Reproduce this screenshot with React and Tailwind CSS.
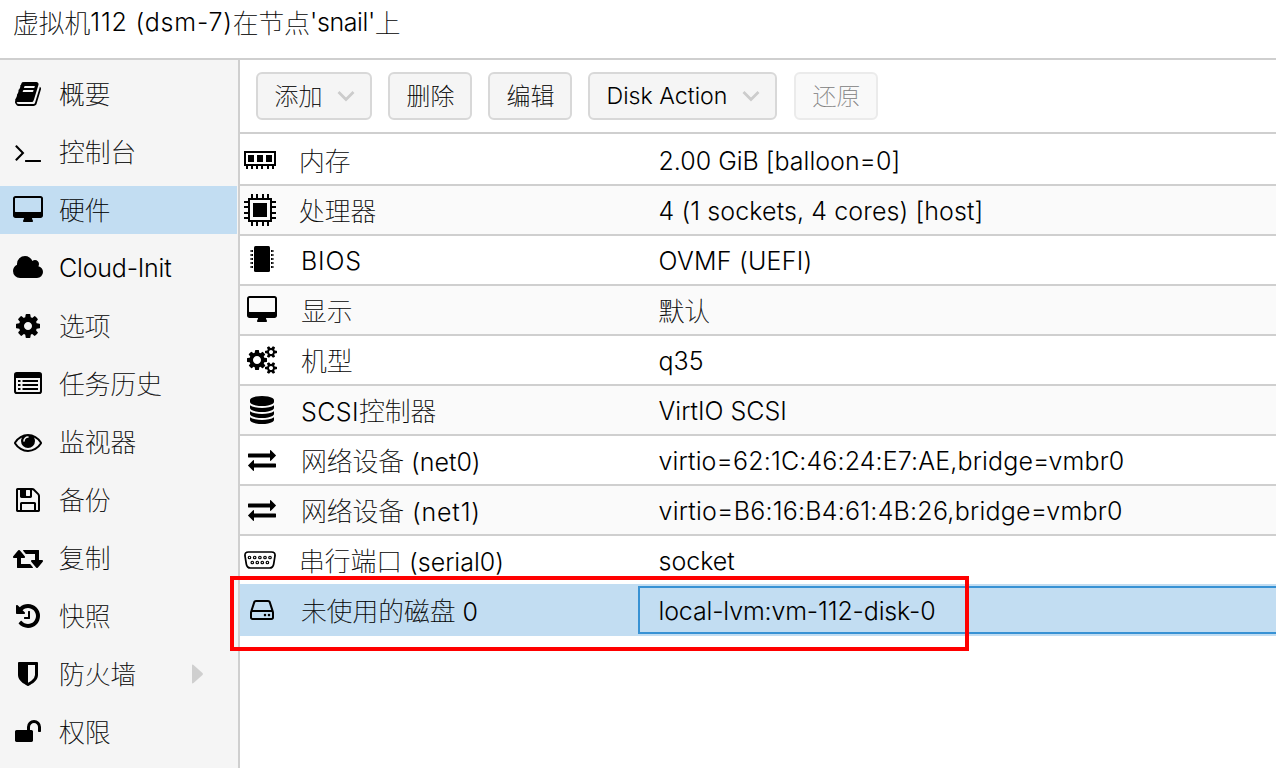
import React from "react";

function Glyph({ box, d, w, h, shift = "" }) {
  return (
    <svg viewBox={box} width={w} height={h} className={`relative shrink-0 ${shift}`} fill="currentColor" aria-hidden="true">
      <path d={d} />
    </svg>
  );
}

const PATHS = {
  book: "M1639 478q40 57 18 129l-275 906q-19 64-76.5 107.5t-122.5 43.5h-923q-77 0-148.5-53.5t-99.5-131.5q-24-67-2-127 0-4 3-27t4-37q1-8-3-21.5t-3-19.5q2-11 8-21t16.5-23.5 16.5-23.5q23-38 45-91.5t30-91.5q3-10 .5-30t-.5-28q3-11 17-28t17-23q21-36 42-92t25-90q1-9-2.5-32t.5-28q4-13 22-30.5t22-22.5q19-26 42.5-84.5t27.5-96.5q1-8-3-25.5t-2-26.5q2-8 9-18t18-23 17-21q8-12 16.5-30.5t15-35 16-36 19.5-32 26.5-23.5 36-11.5 47.5 5.5l-1 3q38-9 51-9h761q74 0 114 56t18 130l-274 906q-36 119-71.5 153.5t-128.5 34.5h-869q-27 0-38 15-11 16-1 43 24 70 144 70h923q29 0 56-15.5t35-41.5l300-987q7-22 5-57 38 15 59 43zm-1064 2q-4 13 2 22.5t20 9.5h608q13 0 25.5-9.5t16.5-22.5l21-64q4-13-2-22.5t-20-9.5h-608q-13 0-25.5 9.5t-16.5 22.5zm-83 256q-4 13 2 22.5t20 9.5h608q13 0 25.5-9.5t16.5-22.5l21-64q4-13-2-22.5t-20-9.5h-608q-13 0-25.5 9.5t-16.5 22.5z",
  terminal: "M649 983l-466 466q-10 10-23 10t-23-10l-50-50q-10-10-10-23t10-23l393-393-393-393q-10-10-10-23t10-23l50-50q10-10 23-10t23 10l466 466q10 10 10 23t-10 23zm1079 457v64q0 14-9 23t-23 9h-960q-14 0-23-9t-9-23v-64q0-14 9-23t23-9h960q14 0 23 9t9 23z",
  desktop: "M1792 992v-832q0-13-9.5-22.5t-22.5-9.5h-1600q-13 0-22.5 9.5t-9.5 22.5v832q0 13 9.5 22.5t22.5 9.5h1600q13 0 22.5-9.5t9.5-22.5zm128-832v1088q0 66-47 113t-113 47h-544q0 37 16 77.5t32 71 16 43.5q0 26-19 45t-45 19h-512q-26 0-45-19t-19-45q0-14 16-44t32-70 16-78h-544q-66 0-113-47t-47-113v-1088q0-66 47-113t113-47h1600q66 0 113 47t47 113z",
  cloud: "M1920 1152q0 159-112.5 271.5t-271.5 112.5h-1088q-185 0-316.5-131.5t-131.5-316.5q0-132 71-241.5t187-163.5q-2-28-2-43 0-212 150-362t362-150q158 0 286.5 88t187.5 230q70-62 166-62 106 0 181 75t75 181q0 75-41 138 129 30 213 134.5t84 239.5z",
  cog: "M1024 896q0-106-75-181t-181-75-181 75-75 181 75 181 181 75 181-75 75-181zm512-109v222q0 12-8 23t-20 13l-185 28q-19 54-39 91 35 50 107 138 10 12 10 25t-9 23q-27 37-99 108t-94 71q-12 0-26-9l-138-108q-44 23-91 38-16 136-29 186-7 28-36 28h-222q-14 0-24.5-8.5t-11.5-21.5l-28-184q-49-16-90-37l-141 107q-10 9-25 9-14 0-25-11-126-114-165-168-7-10-7-23 0-12 8-23 15-21 51-66.5t54-70.5q-27-50-41-99l-183-27q-13-2-21-12.5t-8-23.5v-222q0-12 8-23t19-13l186-28q14-46 39-92-40-57-107-138-10-12-10-24 0-10 9-23 26-36 98.5-107.5t94.5-71.5q13 0 26 10l138 107q44-23 91-38 16-136 29-186 7-28 36-28h222q14 0 24.5 8.5t11.5 21.5l28 184q49 16 90 37l142-107q9-9 24-9 13 0 25 10 129 119 165 170 7 8 7 22 0 12-8 23-15 21-51 66.5t-54 70.5q26 50 41 98l183 28q13 2 21 12.5t8 23.5z",
  eye: "M1664 960q-152-236-381-353 61 104 61 225 0 185-131.5 316.5t-316.5 131.5-316.5-131.5-131.5-316.5q0-121 61-225-229 117-381 353 133 205 333.5 326.5t434.5 121.5 434.5-121.5 333.5-326.5zm-720-384q0-20-14-34t-34-14q-125 0-214.5 89.5t-89.5 214.5q0 20 14 34t34 14 34-14 14-34q0-86 61-147t147-61q20 0 34-14t14-34zm848 384q0 34-20 69-140 230-376.5 368.5t-499.5 138.5-499.5-139-376.5-368q-20-35-20-69t20-69q140-229 376.5-368t499.5-139 499.5 139 376.5 368q20 35 20 69z",
  floppy: "M384 1536h768v-384h-768v384zm896 0h128v-896q0-14-10-38.5t-20-34.5l-281-281q-10-10-34-20t-39-10v416q0 40-28 68t-68 28h-576q-40 0-68-28t-28-68v-416h-128v1280h128v-416q0-40 28-68t68-28h832q40 0 68 28t28 68v416zm-384-928v-320q0-13-9.5-22.5t-22.5-9.5h-192q-13 0-22.5 9.5t-9.5 22.5v320q0 13 9.5 22.5t22.5 9.5h192q13 0 22.5-9.5t9.5-22.5zm640 32v928q0 40-28 68t-68 28h-1344q-40 0-68-28t-28-68v-1344q0-40 28-68t68-28h928q40 0 88 20t76 48l280 280q28 28 48 76t20 88z",
  retweet: "M1280 1504q0 13-9.5 22.5t-22.5 9.5h-960q-8 0-13.5-2t-9-7-5.5-8-3-11.5-1-11.5v-600h-192q-26 0-45-19t-19-45q0-24 15-41l320-384q19-22 49-22t49 22l320 384q15 17 15 41 0 26-19 45t-45 19h-192v384h576q16 0 25 11l160 192q7 10 7 21zm640-416q0 24-15 41l-320 384q-20 23-49 23t-49-23l-320-384q-15-17-15-41 0-26 19-45t45-19h192v-384h-576q-16 0-25-12l-160-192q-7-9-7-20 0-13 9.5-22.5t22.5-9.5h960q8 0 13.5 2t9 7 5.5 8 3 11.5 1 11.5v600h192q26 0 45 19t19 45z",
  history: "M1536 896q0 156-61 298t-164 245-245 164-298 61q-172 0-327-72.5t-264-204.5q-7-10-6.5-22.5t8.5-20.5l137-138q10-9 25-9 16 2 23 12 73 95 179 147t225 52q104 0 198.5-40.5t163.5-109.5 109.5-163.5 40.5-198.5-40.5-198.5-109.5-163.5-163.5-109.5-198.5-40.5q-98 0-188 35.5t-160 101.5l137 138q31 30 14 69-17 40-59 40h-448q-26 0-45-19t-19-45v-448q0-42 40-59 39-17 69 14l130 129q107-101 244.5-156.5t284.5-55.5q156 0 298 61t245 164 164 245 61 298zm-640-288v448q0 14-9 23t-23 9h-320q-14 0-23-9t-9-23v-64q0-14 9-23t23-9h224v-352q0-14 9-23t23-9h64q14 0 23 9t9 23z",
  shield: "M1088 960v-640h-448v1137q119-63 213-137 235-184 235-360zm192-768v768q0 86-33.5 170.5t-83 150-118 127.5-126.5 103-121 77.5-89.5 49.5-42.5 20q-12 6-26 6t-26-6q-16-7-42.5-20t-89.5-49.5-121-77.5-126.5-103-118-127.5-83-150-33.5-170.5v-768q0-26 19-45t45-19h1152q26 0 45 19t19 45z",
  unlock: "M1664 576v256q0 26-19 45t-45 19h-64q-26 0-45-19t-19-45v-256q0-106-75-181t-181-75-181 75-75 181v192h96q40 0 68 28t28 68v576q0 40-28 68t-68 28h-960q-40 0-68-28t-28-68v-576q0-40 28-68t68-28h672v-192q0-185 131.5-316.5t316.5-131.5 316.5 131.5 131.5 316.5z",
  cogs: "M896 896q0-106-75-181t-181-75-181 75-75 181 75 181 181 75 181-75 75-181zm768 512q0-52-38-90t-90-38-90 38-38 90q0 53 37.5 90.5t90.5 37.5 90.5-37.5 37.5-90.5zm0-1024q0-52-38-90t-90-38-90 38-38 90q0 53 37.5 90.5t90.5 37.5 90.5-37.5 37.5-90.5zm-384 421v185q0 10-7 19.5t-16 10.5l-155 24q-11 35-32 76 34 48 90 115 7 11 7 20 0 12-7 19-23 30-82.5 89.5t-78.5 59.5q-11 0-21-7l-115-90q-37 19-77 31-11 108-23 155-7 24-30 24h-186q-11 0-20-7.5t-10-17.5l-23-153q-34-10-75-31l-118 89q-7 7-20 7-11 0-21-8-144-133-144-160 0-9 7-19 10-14 41-53t47-61q-23-44-35-82l-152-24q-10-1-17-9.5t-7-19.5v-185q0-10 7-19.5t16-10.5l155-24q11-35 32-76-34-48-90-115-7-11-7-20 0-12 7-20 22-30 82-89t79-59q11 0 21 7l115 90q34-18 77-32 11-108 23-154 7-24 30-24h186q11 0 20 7.5t10 17.5l23 153q34 10 75 31l118-89q8-7 20-7 11 0 21 8 144 133 144 160 0 8-7 19-12 16-42 54t-45 60q23 48 34 82l152 23q10 2 17 10.5t7 19.5zm640 533v140q0 16-149 31-12 27-30 52 51 113 51 138 0 4-4 7-122 71-124 71-8 0-46-47t-52-68q-20 2-30 2t-30-2q-14 21-52 68t-46 47q-2 0-124-71-4-3-4-7 0-25 51-138-18-25-30-52-149-15-149-31v-140q0-16 149-31 13-29 30-52-51-113-51-138 0-4 4-7 4-2 35-20t59-34 30-16q8 0 46 46.5t52 67.5q20-2 30-2t30 2q51-71 92-112l6-2q4 0 124 70 4 3 4 7 0 25-51 138 17 23 30 52 149 15 149 31zm0-1024v140q0 16-149 31-12 27-30 52 51 113 51 138 0 4-4 7-122 71-124 71-8 0-46-47t-52-68q-20 2-30 2t-30-2q-14 21-52 68t-46 47q-2 0-124-71-4-3-4-7 0-25 51-138-18-25-30-52-149-15-149-31v-140q0-16 149-31 13-29 30-52-51-113-51-138 0-4 4-7 4-2 35-20t59-34 30-16q8 0 46 46.5t52 67.5q20-2 30-2t30 2q51-71 92-112l6-2q4 0 124 70 4 3 4 7 0 25-51 138 17 23 30 52 149 15 149 31z",
  database: "M768 768q237 0 443-43t325-127v170q0 69-103 128t-280 93.5-385 34.5-385-34.5-280-93.5-103-128v-170q119 84 325 127t443 43zm0 768q237 0 443-43t325-127v170q0 69-103 128t-280 93.5-385 34.5-385-34.5-280-93.5-103-128v-170q119 84 325 127t443 43zm0-384q237 0 443-43t325-127v170q0 69-103 128t-280 93.5-385 34.5-385-34.5-280-93.5-103-128v-170q119 84 325 127t443 43zm0-1152q208 0 385 34.5t280 93.5 103 128v128q0 69-103 128t-280 93.5-385 34.5-385-34.5-280-93.5-103-128v-128q0-69 103-128t280-93.5 385-34.5z",
  exchange: "M1792 1184v192q0 13-9.5 22.5t-22.5 9.5h-1376v192q0 13-9.5 22.5t-22.5 9.5q-12 0-24-10l-319-320q-9-9-9-22 0-14 9-23l320-320q9-9 23-9 13 0 22.5 9.5t9.5 22.5v192h1376q13 0 22.5 9.5t9.5 22.5zm0-544q0 14-9 23l-320 320q-9 9-23 9-13 0-22.5-9.5t-9.5-22.5v-192h-1376q-13 0-22.5-9.5t-9.5-22.5v-192q0-13 9.5-22.5t22.5-9.5h1376v-192q0-14 9-23t23-9q12 0 24 10l319 319q9 9 9 23z",
  hdd: "M1040 1216q0 33-23.5 56.5t-56.5 23.5-56.5-23.5-23.5-56.5 23.5-56.5 56.5-23.5 56.5 23.5 23.5 56.5zm256 0q0 33-23.5 56.5t-56.5 23.5-56.5-23.5-23.5-56.5 23.5-56.5 56.5-23.5 56.5 23.5 23.5 56.5zm112 160v-320q0-13-9.5-22.5t-22.5-9.5h-1216q-13 0-22.5 9.5t-9.5 22.5v320q0 13 9.5 22.5t22.5 9.5h1216q13 0 22.5-9.5t9.5-22.5zm-1230-480h1180l-157-482q-4-13-16-21.5t-26-8.5h-782q-14 0-26 8.5t-16 21.5zm1358 160v320q0 66-47 113t-113 47h-1216q-66 0-113-47t-47-113v-320q0-25 16-75l197-606q17-53 63-86t101-33h782q55 0 101 33t63 86l197 606q16 50 16 75z",
};

const desktop = (shift) => <Glyph box="0 0 1920 1664" d={PATHS.desktop} w={30} h={26} shift={shift} />;

const ListIcon = () => (
  <svg viewBox="0 0 28 22" width="28" height="22" className="relative -top-px shrink-0" aria-hidden="true">
    <rect x="1" y="1" width="26" height="20" rx="1.8" fill="none" stroke="black" strokeWidth="2" />
    <rect x="1" y="1" width="26" height="5" />
    <path d="M4 8h2.5v2H4zM4 12h2.5v2H4zM4 16h2.5v2H4zM8.5 8H24v2H8.5zM8.5 12H24v2H8.5zM8.5 16H24v2H8.5z" />
  </svg>
);

const MemoryIcon = () => (
  <svg viewBox="0 0 32 18" width="32" height="18" shapeRendering="crispEdges" aria-hidden="true">
    <path d="M1 1H31V14H1Z" fill="none" stroke="black" strokeWidth="2" />
    <path d="M4 4h6v7H4zM13 4h6v7h-6zM22 4h6v7h-6zM2 15h2v3H2zM7 15h2v3H7zM12 15h2v3h-2zM17 15h2v3h-2zM23 15h2v3h-2zM28 15h2v3h-2z" />
  </svg>
);

const CpuIcon = () => (
  <svg viewBox="0 0 32 32" width="32" height="32" shapeRendering="crispEdges" aria-hidden="true">
    <rect x="5" y="5" width="22" height="22" fill="none" stroke="black" strokeWidth="2" />
    <rect x="9" y="9" width="14" height="14" />
    <path d="M7 0h2v4H7zM12 0h2v4h-2zM18 0h2v4h-2zM23 0h2v4h-2zM7 28h2v4H7zM12 28h2v4h-2zM18 28h2v4h-2zM23 28h2v4h-2zM0 7h4v2H0zM0 12h4v2H0zM0 18h4v2H0zM0 23h4v2H0zM28 7h4v2h-4zM28 12h4v2h-4zM28 18h4v2h-4zM28 23h4v2h-4z" />
  </svg>
);

const ChipIcon = () => (
  <svg viewBox="0 0 24 26" width="24" height="26" className="relative -top-px" aria-hidden="true">
    <rect x="4" y="0" width="16" height="26" rx="1.5" />
    {[4, 8, 12, 16, 20].map((y) => (
      <path key={y} d={`M3 ${y}v2H1.5v-.5H0v-1h1.500v-.5zM21 ${y}v2h1.500v-.5H24v-1h-1.500v-.5z`} />
    ))}
  </svg>
);

const SerialIcon = () => (
  <svg viewBox="0 0 32 18" width="32" height="18" fill="none" stroke="black" aria-hidden="true">
    <path d="M4.500 1h23Q31.500 1 31 5l-1.300 8Q29 17 25.500 17h-19Q3 17 2.300 13L1 5Q.5 1 4.500 1Z" strokeWidth="1.700" />
    {[5.5, 10.7, 15.9, 21, 26].map((x) => <circle key={x} cx={x} cy="6.500" r="1.250" strokeWidth="1.200" />)}
    {[8.3, 13.3, 18.3, 23.4].map((x) => <circle key={x} cx={x} cy="11.500" r="1.250" strokeWidth="1.200" />)}
  </svg>
);

const Chevron = () => (
  <svg viewBox="0 0 18 12" width="18" height="12" fill="none" stroke="#cccccc" strokeWidth="2.800" aria-hidden="true">
    <path d="M1.500 2 9 9.500 16.500 2" />
  </svg>
);

// Latin and Chinese runs use different faces, so the text is split between them.
function Mixed({ text, track = "" }) {
  return text.split(/([\u4e00-\u9fff]+)/).filter(Boolean).map((part, i) =>
    /[\u4e00-\u9fff]/.test(part) ? (
      <span key={i} className="font-['Noto_Sans_CJK_SC',sans-serif] text-[1.03em] font-thin [-webkit-text-stroke:0.2px_currentColor]">{part}</span>
    ) : (
      <span key={i} className={`whitespace-pre font-light ${track}`}>{part}</span>
    )
  );
}

const MENU = [
  { text: "概要", icon: <Glyph box="0 128 1664 1536" d={PATHS.book} w={26} h={24} /> },
  { text: "控制台", icon: <Glyph box="64 448 1664 1088" d={PATHS.terminal} w={26} h={17} shift="top-[1.5px]" /> },
  { text: "硬件", icon: desktop("-top-px"), active: true },
  { text: "Cloud-Init", icon: <Glyph box="0 128 1920 1408" d={PATHS.cloud} w={30} h={22} shift="-top-px" />, track: "tracking-[-0.2px]" },
  { text: "选项", icon: <Glyph box="0 128 1536 1536" d={PATHS.cog} w={24} h={24} /> },
  { text: "任务历史", icon: <ListIcon /> },
  { text: "监视器", icon: <Glyph box="0 384 1792 1152" d={PATHS.eye} w={28} h={18} shift="top-px" /> },
  { text: "备份", icon: <Glyph box="0 128 1536 1536" d={PATHS.floppy} w={24} h={24} /> },
  { text: "复制", icon: <Glyph box="0 384 1920 1152" d={PATHS.retweet} w={30} h={18} shift="top-px" /> },
  { text: "快照", icon: <Glyph box="0 128 1536 1536" d={PATHS.history} w={24} h={24} /> },
  { text: "防火墙", icon: <Glyph box="0 128 1280 1536" d={PATHS.shield} w={20} h={24} />, more: true },
  { text: "权限", icon: <Glyph box="0 128 1664 1408" d={PATHS.unlock} w={26} h={22} shift="-top-px" /> },
];

const exchange = <Glyph box="0 288 1792 1344" d={PATHS.exchange} w={28} h={21} />;

const ROWS = [
  { name: "内存", value: "2.00 GiB [balloon=0]", icon: <MemoryIcon />, image: true },
  { name: "处理器", value: "4 (1 sockets, 4 cores) [host]", icon: <CpuIcon />, image: true, track: "tracking-[0.1px]" },
  { name: "BIOS", value: "OVMF (UEFI)", icon: <ChipIcon />, nameTrack: "tracking-[0.8px]", track: "tracking-[0.25px]" },
  { name: "显示", value: "默认", icon: desktop("-top-px") },
  { name: "机型", value: "q35", icon: <Glyph box="0 0 1920 1792" d={PATHS.cogs} w={30} h={28} /> },
  { name: "SCSI控制器", value: "VirtIO SCSI", icon: <Glyph box="0 0 1536 1792" d={PATHS.database} w={24} h={28} />, nameTrack: "tracking-[0.4px]" },
  { name: "网络设备 (net0)", value: "virtio=62:1C:46:24:E7:AE,bridge=vmbr0", icon: exchange, track: "tracking-[0.14px]" },
  { name: "网络设备 (net1)", value: "virtio=B6:16:B4:61:4B:26,bridge=vmbr0", icon: exchange, nameTrack: "tracking-[0.85px]", track: "tracking-[0.23px]" },
  { name: "串行端口 (serial0)", value: "socket", icon: <SerialIcon />, image: true },
  { name: "未使用的磁盘 0", value: "local-lvm:vm-112-disk-0", icon: <Glyph box="0 256 1536 1280" d={PATHS.hdd} w={24} h={20} />, selected: true, track: "tracking-[-0.15px]" },
];

function Button({ text, width, menu, disabled }) {
  return (
    <button className={`flex h-12 shrink-0 items-center justify-between rounded-md border-2 border-[#d8d8d8] bg-[#f5f5f5] pl-[16.500px] pr-[15.500px] text-[23.200px] ${width} ${disabled ? "opacity-50" : ""}`}>
      <span className="whitespace-nowrap"><Mixed text={text} /></span>
      {menu && <Chevron />}
    </button>
  );
}

export default function App() {
  return (
    <div className="relative flex h-[768px] w-[1276px] flex-col overflow-hidden bg-white font-['Inter',sans-serif] text-[25px] leading-[30px] text-black [font-feature-settings:'calt'_0]">
      <header className="flex h-[60px] shrink-0 items-start border-b-2 border-[#cfcfcf] pl-[13px] pt-[7px] whitespace-nowrap">
        <Mixed text="虚拟机112 (dsm-7)在节点" track="tracking-[0.8px]" />
        <Mixed text="'snail'上" track="tracking-[-0.4px]" />
      </header>
      <div className="flex min-h-0 flex-1">
        <nav className="flex w-60 shrink-0 flex-col gap-2.5 border-r-2 border-[#cfcfcf] bg-[#f5f5f5] pt-2.5 pr-px">
          {MENU.map((item) => (
            <div key={item.text} className={`flex h-12 shrink-0 items-center ${item.active ? "bg-[#c2ddf2]" : ""}`}>
              <span className="flex w-14 shrink-0 justify-center"><span className="flex h-12 items-center">{item.icon}</span></span>
              <span className="flex-1 whitespace-nowrap pb-px pl-[3px]"><Mixed text={item.text} track={item.track} /></span>
              {item.more && (
                <svg viewBox="0 0 12 20" width="12" height="20" fill="#cfcfcf" className="mr-[33px]" aria-hidden="true">
                  <path d="M0 1.500Q0 0 1.500 1L10.500 9Q11.500 10 10.500 11L1.500 19Q0 20 0 18.500Z" />
                </svg>
              )}
            </div>
          ))}
        </nav>
        <main className="flex min-w-0 flex-1 flex-col">
          <div className="flex h-[74px] shrink-0 gap-4 border-b-2 border-[#cfcfcf] pt-3 pl-4">
            <Button text="添加" width="w-[116px]" menu />
            <Button text="删除" width="w-[84px]" />
            <Button text="编辑" width="w-[84px]" />
            <div className="w-[190px] shrink-0"><Button text="Disk Action" width="w-[189px]" menu /></div>
            <Button text="还原" width="w-[84px]" disabled />
          </div>
          <div className="flex flex-col pt-0.5">
            {ROWS.map((row, i) => (
              <div
                key={row.name}
                className={`flex shrink-0 items-stretch ${row.selected ? "-mt-0.5 h-[52px] border-y-2 border-[#c2ddf2] bg-[#c2ddf2]" : `h-[50px] border-b-2 border-[#cfcfcf] ${i % 2 ? "bg-[#fafafa]" : "bg-white"}`}`}
              >
                <div className={`flex shrink-0 items-center justify-center ${row.image ? "w-10" : "w-11"}`}>{row.icon}</div>
                <div className={`flex items-center whitespace-nowrap pt-0.5 ${row.image ? "w-[358px] pl-[19px]" : "w-[354px] pl-[17px]"}`}>
                  <span><Mixed text={row.name} track={row.nameTrack} /></span>
                </div>
                <div className={`flex min-w-0 flex-1 items-center whitespace-nowrap ${row.selected ? "border-y-2 border-l-2 border-[#3892d4] pt-0.5 pl-[18.500px]" : "pt-0.5 pl-[20.500px]"}`}>
                  <span><Mixed text={row.value} track={row.track} /></span>
                </div>
              </div>
            ))}
          </div>
        </main>
      </div>
      <div className="pointer-events-none absolute left-[230px] top-[576px] h-[75px] w-[739px] border-4 border-[#ff0000]" />
    </div>
  );
}
